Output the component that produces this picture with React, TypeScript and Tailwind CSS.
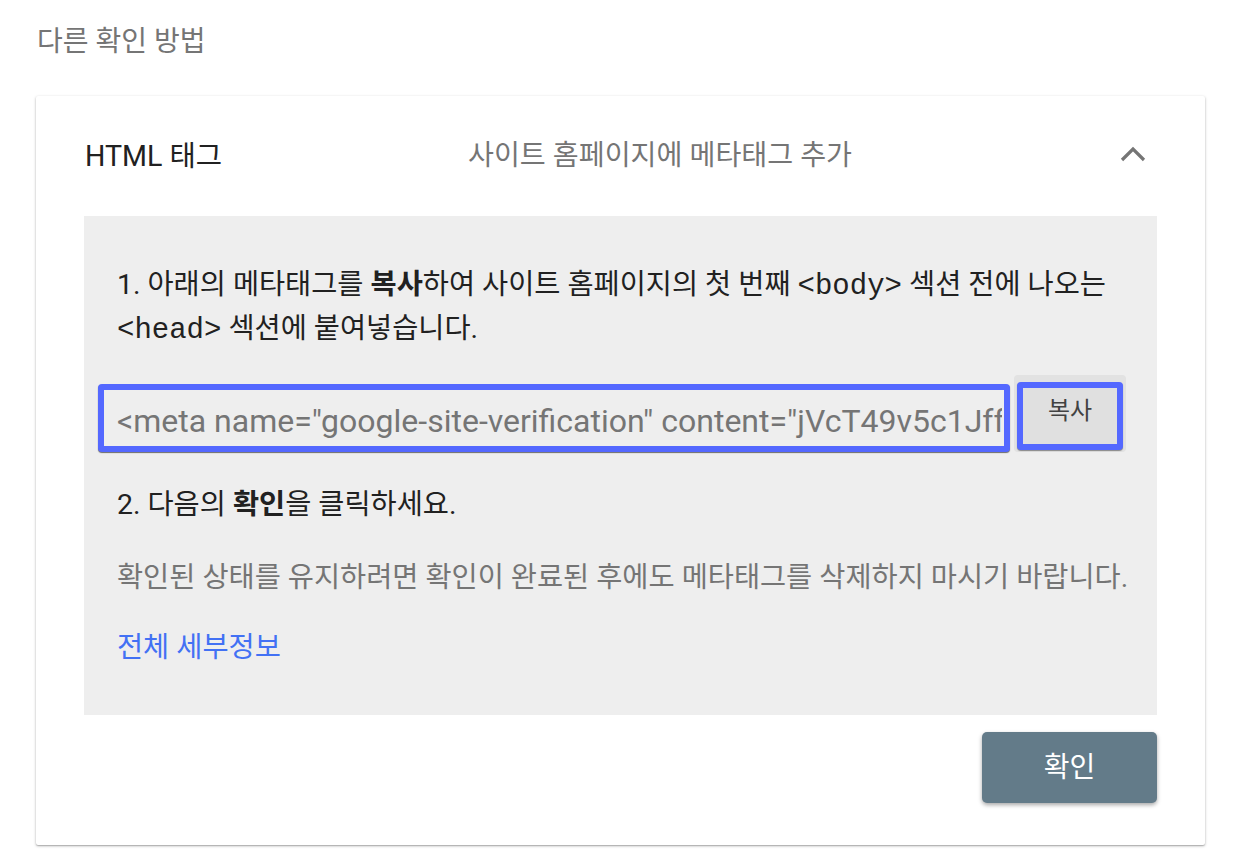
import React from "react";

const sans = { fontFamily: 'Roboto, "Noto Sans CJK KR", sans-serif' };
const mono = { fontFamily: '"Liberation Mono", "Courier New", Courier, monospace' };

export default function App() {
  return (
    <div
      className="w-[1238px] h-[860px] bg-white overflow-hidden"
      style={sans}
    >
      <div className="pl-[37px] pt-[24px] text-[28px] leading-[36px] text-[#757575]">
        다른 확인 방법
      </div>

      <div className="ml-[36px] mt-[36px] w-[1169px] bg-white rounded-[2px] shadow-[0_1px_3px_rgba(0,0,0,0.28),0_1px_1px_rgba(0,0,0,0.14)] pb-[42px]">
        <div className="h-[120px] flex items-center pl-[49px] pr-[59px]">
          <div className="w-[383px] text-[28.6px] text-[#212121]">HTML 태그</div>
          <div className="flex-1 text-[28.2px] text-[#757575]">
            사이트 홈페이지에 메타태그 추가
          </div>
          <svg width="26" height="16" viewBox="0 0 26 16" className="-mt-[4px]">
            <polyline
              points="2,14 13,3 24,14"
              fill="none"
              stroke="#757575"
              strokeWidth="3.2"
            />
          </svg>
        </div>

        <div className="mx-[48px] bg-[#eeeeee] pt-[48px] pb-[46px]">
          <p className="pl-[33px] pr-[20px] text-[28.4px] leading-[42px] text-[#212121]">
            1. 아래의 메타태그를 <b className="font-bold">복사</b>하여 사이트
            홈페이지의 첫 번째{" "}
            <span className="text-[29px]" style={mono}>
              &lt;body&gt;
            </span>{" "}
            섹션 전에 나오는{" "}
            <span className="text-[29px]" style={mono}>
              &lt;head&gt;
            </span>{" "}
            섹션에 붙여넣습니다.
          </p>

          <div className="mt-[23px] flex items-end pl-[14px]">
            <div className="w-[912px] h-[68px] border-[6px] border-[#5468ff] rounded-[4px] bg-[#eeeeee] shadow-[0_1px_1px_rgba(0,0,0,0.55)] overflow-hidden flex items-center pl-[13px] pr-[2px]">
              <div className="w-full overflow-hidden whitespace-nowrap text-[32px] leading-[40px] text-[#757575] mt-[6px]">
                &lt;meta name="google-site-verification"
                content="jVcT49v5c1JffQ2xWp8_mKs3dLr0aZ"&gt;
              </div>
            </div>
            <div className="ml-[4px] w-[112px] h-[77px] bg-[#e2e2e2] rounded-[4px] flex items-end justify-center pb-[2px]">
              <div className="w-[106px] h-[68px] border-[6px] border-[#5468ff] rounded-[4px] bg-[#e0e0e0] shadow-[0_1px_1px_rgba(0,0,0,0.4)] flex items-start justify-center pt-[5px] text-[24px] text-[#424242]">
                복사
              </div>
            </div>
          </div>

          <p className="mt-[32px] pl-[33px] text-[28.4px] leading-[42px] text-[#212121]">
            2. 다음의 <b className="font-bold">확인</b>을 클릭하세요.
          </p>

          <p className="mt-[31px] pl-[33px] text-[28.4px] leading-[42px] text-[#757575]">
            확인된 상태를 유지하려면 확인이 완료된 후에도 메타태그를 삭제하지
            마시기 바랍니다.
          </p>

          <p className="mt-[28px] pl-[33px] text-[28.4px] leading-[42px] text-[#4271f4]">
            전체 세부정보
          </p>
        </div>

        <div className="flex justify-end mr-[48px] mt-[17px]">
          <button className="w-[175px] h-[71px] rounded-[5px] bg-[#637b89] text-white text-[28px] shadow-[0_2px_4px_rgba(0,0,0,0.35)]">
            확인
          </button>
        </div>
      </div>
    </div>
  );
}
